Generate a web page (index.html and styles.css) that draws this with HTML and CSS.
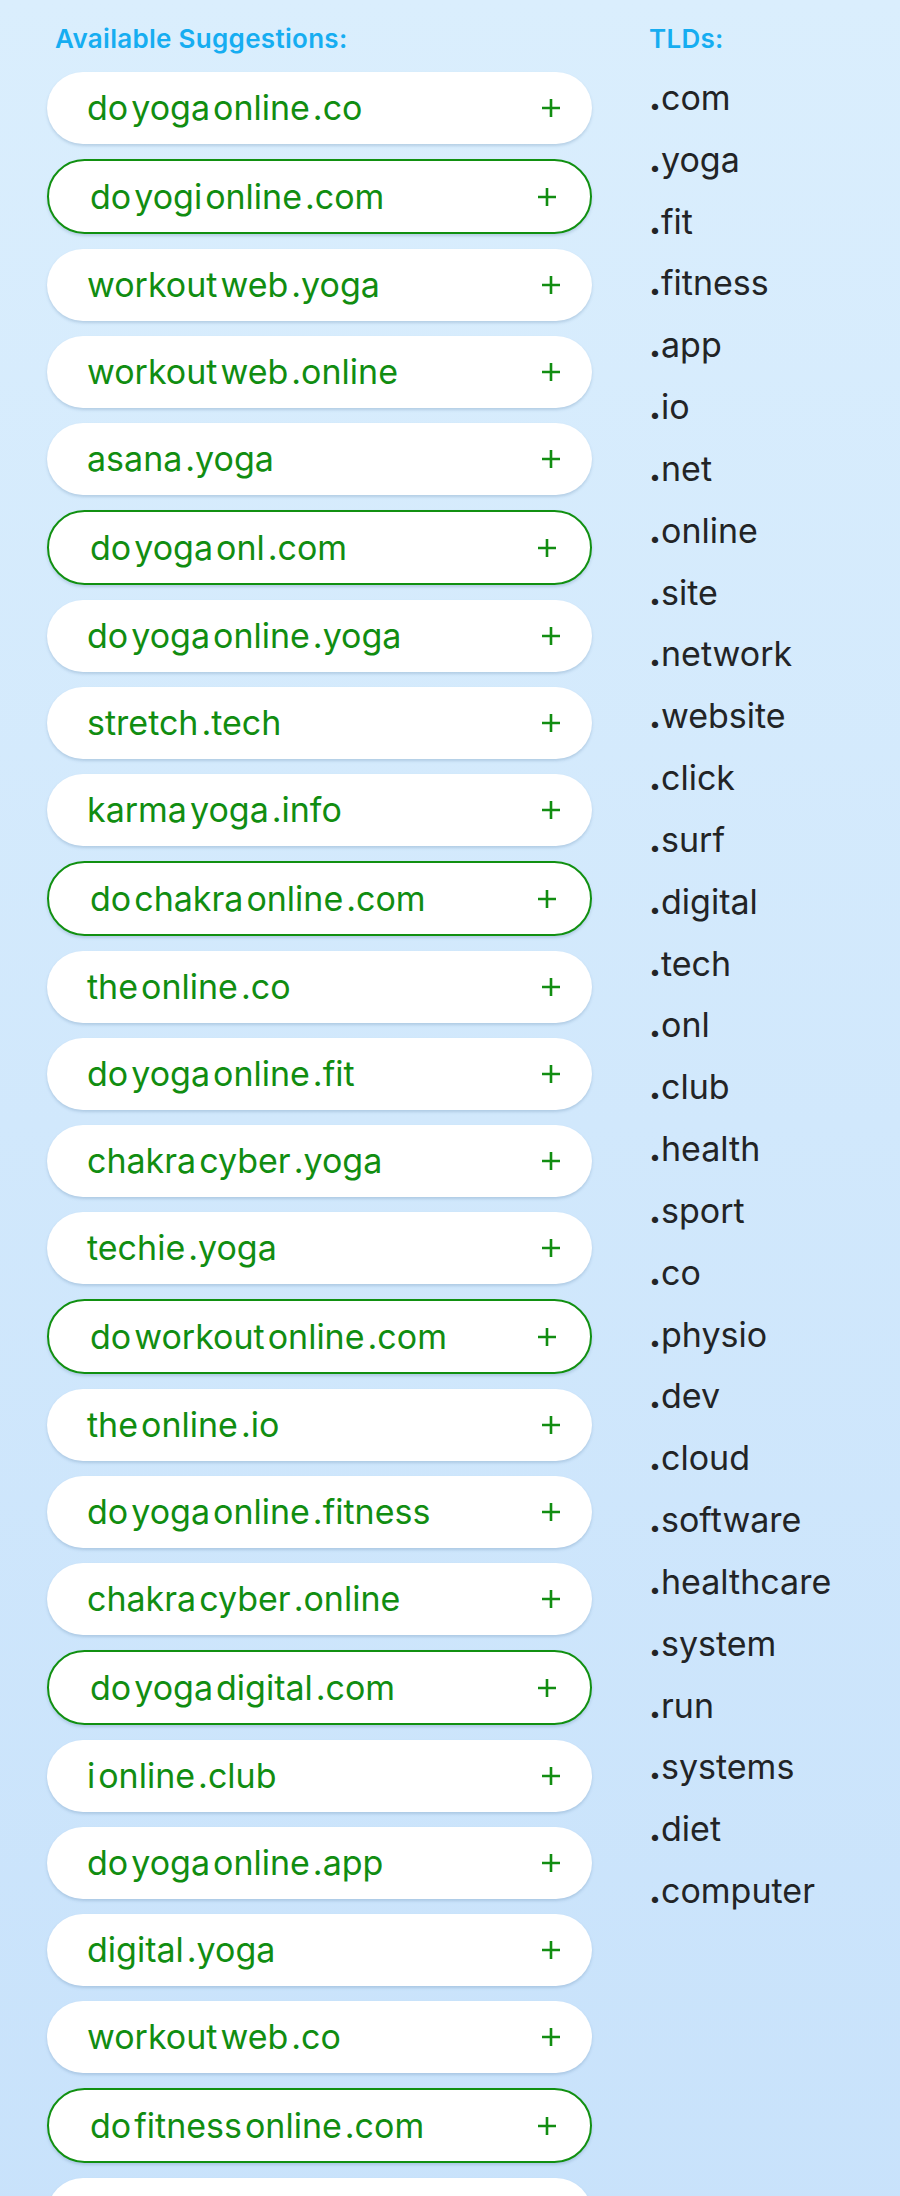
FILE: index.html
```html
<!DOCTYPE html>
<html lang="en">
<head>
<meta charset="utf-8">
<title>Domain suggestions</title>
<link rel="stylesheet" href="styles.css">
</head>
<body>
<main class="page">
  <section class="col col-suggest">
    <h2 class="col-title title-suggest">Available Suggestions:</h2>
    <ul class="pills">
      <li class="pill"><span class="name"><span>do</span><span>yoga</span><span>online</span><span>.co</span></span><svg class="plus" viewBox="0 0 18 18"><path d="M9 0v18M0 9h18"/></svg></li>
      <li class="pill pill-sel"><span class="name"><span>do</span><span>yogi</span><span>online</span><span>.com</span></span><svg class="plus" viewBox="0 0 18 18"><path d="M9 0v18M0 9h18"/></svg></li>
      <li class="pill"><span class="name"><span>workout</span><span>web</span><span>.yoga</span></span><svg class="plus" viewBox="0 0 18 18"><path d="M9 0v18M0 9h18"/></svg></li>
      <li class="pill"><span class="name"><span>workout</span><span>web</span><span>.online</span></span><svg class="plus" viewBox="0 0 18 18"><path d="M9 0v18M0 9h18"/></svg></li>
      <li class="pill"><span class="name"><span>asana</span><span>.yoga</span></span><svg class="plus" viewBox="0 0 18 18"><path d="M9 0v18M0 9h18"/></svg></li>
      <li class="pill pill-sel"><span class="name"><span>do</span><span>yoga</span><span>onl</span><span>.com</span></span><svg class="plus" viewBox="0 0 18 18"><path d="M9 0v18M0 9h18"/></svg></li>
      <li class="pill"><span class="name"><span>do</span><span>yoga</span><span>online</span><span>.yoga</span></span><svg class="plus" viewBox="0 0 18 18"><path d="M9 0v18M0 9h18"/></svg></li>
      <li class="pill"><span class="name"><span>stretch</span><span>.tech</span></span><svg class="plus" viewBox="0 0 18 18"><path d="M9 0v18M0 9h18"/></svg></li>
      <li class="pill"><span class="name"><span>karma</span><span>yoga</span><span>.info</span></span><svg class="plus" viewBox="0 0 18 18"><path d="M9 0v18M0 9h18"/></svg></li>
      <li class="pill pill-sel"><span class="name"><span>do</span><span>chakra</span><span>online</span><span>.com</span></span><svg class="plus" viewBox="0 0 18 18"><path d="M9 0v18M0 9h18"/></svg></li>
      <li class="pill"><span class="name"><span>the</span><span>online</span><span>.co</span></span><svg class="plus" viewBox="0 0 18 18"><path d="M9 0v18M0 9h18"/></svg></li>
      <li class="pill"><span class="name"><span>do</span><span>yoga</span><span>online</span><span>.fit</span></span><svg class="plus" viewBox="0 0 18 18"><path d="M9 0v18M0 9h18"/></svg></li>
      <li class="pill"><span class="name"><span>chakra</span><span>cyber</span><span>.yoga</span></span><svg class="plus" viewBox="0 0 18 18"><path d="M9 0v18M0 9h18"/></svg></li>
      <li class="pill"><span class="name"><span>techie</span><span>.yoga</span></span><svg class="plus" viewBox="0 0 18 18"><path d="M9 0v18M0 9h18"/></svg></li>
      <li class="pill pill-sel"><span class="name"><span>do</span><span>workout</span><span>online</span><span>.com</span></span><svg class="plus" viewBox="0 0 18 18"><path d="M9 0v18M0 9h18"/></svg></li>
      <li class="pill"><span class="name"><span>the</span><span>online</span><span>.io</span></span><svg class="plus" viewBox="0 0 18 18"><path d="M9 0v18M0 9h18"/></svg></li>
      <li class="pill"><span class="name"><span>do</span><span>yoga</span><span>online</span><span>.fitness</span></span><svg class="plus" viewBox="0 0 18 18"><path d="M9 0v18M0 9h18"/></svg></li>
      <li class="pill"><span class="name"><span>chakra</span><span>cyber</span><span>.online</span></span><svg class="plus" viewBox="0 0 18 18"><path d="M9 0v18M0 9h18"/></svg></li>
      <li class="pill pill-sel"><span class="name"><span>do</span><span>yoga</span><span>digital</span><span>.com</span></span><svg class="plus" viewBox="0 0 18 18"><path d="M9 0v18M0 9h18"/></svg></li>
      <li class="pill"><span class="name"><span>i</span><span>online</span><span>.club</span></span><svg class="plus" viewBox="0 0 18 18"><path d="M9 0v18M0 9h18"/></svg></li>
      <li class="pill"><span class="name"><span>do</span><span>yoga</span><span>online</span><span>.app</span></span><svg class="plus" viewBox="0 0 18 18"><path d="M9 0v18M0 9h18"/></svg></li>
      <li class="pill"><span class="name"><span>digital</span><span>.yoga</span></span><svg class="plus" viewBox="0 0 18 18"><path d="M9 0v18M0 9h18"/></svg></li>
      <li class="pill"><span class="name"><span>workout</span><span>web</span><span>.co</span></span><svg class="plus" viewBox="0 0 18 18"><path d="M9 0v18M0 9h18"/></svg></li>
      <li class="pill pill-sel"><span class="name"><span>do</span><span>fitness</span><span>online</span><span>.com</span></span><svg class="plus" viewBox="0 0 18 18"><path d="M9 0v18M0 9h18"/></svg></li>
      <li class="pill pill-edge"></li>
    </ul>
  </section>
  <section class="col col-tld">
    <h2 class="col-title">TLDs:</h2>
    <ul class="tlds">
      <li><b>.</b>com</li>
      <li><b>.</b>yoga</li>
      <li><b>.</b>fit</li>
      <li><b>.</b>fitness</li>
      <li><b>.</b>app</li>
      <li><b>.</b>io</li>
      <li><b>.</b>net</li>
      <li><b>.</b>online</li>
      <li><b>.</b>site</li>
      <li><b>.</b>network</li>
      <li><b>.</b>website</li>
      <li><b>.</b>click</li>
      <li><b>.</b>surf</li>
      <li><b>.</b>digital</li>
      <li><b>.</b>tech</li>
      <li><b>.</b>onl</li>
      <li><b>.</b>club</li>
      <li><b>.</b>health</li>
      <li><b>.</b>sport</li>
      <li><b>.</b>co</li>
      <li><b>.</b>physio</li>
      <li><b>.</b>dev</li>
      <li><b>.</b>cloud</li>
      <li><b>.</b>software</li>
      <li><b>.</b>healthcare</li>
      <li><b>.</b>system</li>
      <li><b>.</b>run</li>
      <li><b>.</b>systems</li>
      <li><b>.</b>diet</li>
      <li><b>.</b>computer</li>
    </ul>
  </section>
</main>
</body>
</html>
```

FILE: styles.css
```css
* { box-sizing: border-box; }
html, body { margin: 0; padding: 0; }
body {
  min-height: 2196px;
  background: linear-gradient(180deg, #daeefd 0%, #c8e2fb 100%);
  font-family: Inter, "Noto Sans", sans-serif;
  overflow: hidden;
}
.page {
  display: grid;
  grid-template-columns: 545px auto;
  column-gap: 57px;
  padding: 24px 0 0 47px;
}
.col-title {
  margin: 0;
  font-size: 26px;
  line-height: 30px;
  font-weight: 600;
  letter-spacing: 0.3px;
  color: #16adf1;
}
.title-suggest { padding-left: 8px; }
.pills {
  list-style: none;
  margin: 18px 0 0;
  padding: 0;
  display: flex;
  flex-direction: column;
  gap: 15px;
}
.pill {
  height: 72px;
  border-radius: 40px;
  background: #fff;
  box-shadow: 0 2px 3px rgba(90, 130, 170, 0.28);
  display: flex;
  align-items: center;
  justify-content: space-between;
  padding: 0 32px 0 40px;
  color: #118d11;
}
.pill-sel {
  height: 75px;
  border: 2px solid #119011;
  padding: 0 34px 0 41px;
}
.name {
  display: flex;
  gap: 3px;
  font-size: 34px;
  line-height: 40px;
  font-weight: 400;
  letter-spacing: 0;
}
.plus {
  width: 18px;
  height: 18px;
  stroke: #118d11;
  stroke-width: 2.6;
  fill: none;
}
.tlds {
  list-style: none;
  margin: 13px 0 0;
  padding: 0;
  font-size: 34px;
  line-height: 61.83px;
  color: #222426;
}
.tlds b { font-weight: 800; }
```
